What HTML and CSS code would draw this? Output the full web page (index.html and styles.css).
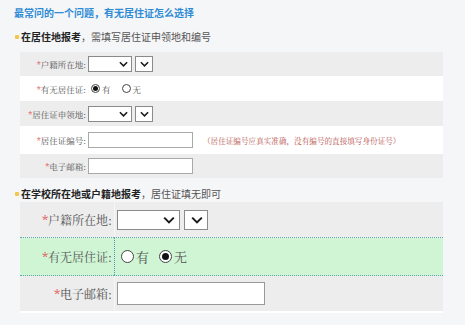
FILE: index.html
```html
<!DOCTYPE html>
<html lang="zh-CN">
<head>
  <meta charset="UTF-8">
  <meta name="viewport" content="width=device-width, initial-scale=1.0">
  <link rel="stylesheet" href="styles.css">
  <title>有无居住证怎么选择</title>
</head>
<body>
  <div class="page">
    <h1 class="title">最常问的一个问题，有无居住证怎么选择</h1>

    <p class="sub"><span class="dot"></span><b>在居住地报考</b>，需填写居住证申领地和编号</p>

    <table class="form small">
      <tr class="gray">
        <td class="lbl"><i>*</i>户籍所在地:</td>
        <td class="fld">
          <span class="sel wide"><svg viewBox="0 0 10 6"><path d="M1 1 L5 5 L9 1"/></svg></span><span class="sel narrow"><svg viewBox="0 0 10 6"><path d="M1 1 L5 5 L9 1"/></svg></span>
        </td>
      </tr>
      <tr class="white">
        <td class="lbl"><i>*</i>有无居住证:</td>
        <td class="fld">
          <span class="radio on"></span><span class="opt">有</span><span class="radio"></span><span class="opt">无</span>
        </td>
      </tr>
      <tr class="gray">
        <td class="lbl"><i>*</i>居住证申领地:</td>
        <td class="fld">
          <span class="sel wide"><svg viewBox="0 0 10 6"><path d="M1 1 L5 5 L9 1"/></svg></span><span class="sel narrow"><svg viewBox="0 0 10 6"><path d="M1 1 L5 5 L9 1"/></svg></span>
        </td>
      </tr>
      <tr class="white tall">
        <td class="lbl"><i>*</i>居住证编号:</td>
        <td class="fld">
          <span class="txt"></span><span class="hint">（居住证编号应真实准确，没有编号的直接填写身份证号）</span>
        </td>
      </tr>
      <tr class="gray">
        <td class="lbl"><i>*</i>电子邮箱:</td>
        <td class="fld"><span class="txt"></span></td>
      </tr>
    </table>

    <p class="sub sub2"><span class="dot"></span><b>在学校所在地或户籍地报考</b>，居住证填无即可</p>

    <table class="form big">
      <tr class="gray">
        <td class="lbl"><i>*</i>户籍所在地:</td>
        <td class="fld">
          <span class="sel wide"><svg viewBox="0 0 10 6"><path d="M1 1 L5 5 L9 1"/></svg></span><span class="sel narrow"><svg viewBox="0 0 10 6"><path d="M1 1 L5 5 L9 1"/></svg></span>
        </td>
      </tr>
      <tr class="green">
        <td class="lbl"><i>*</i>有无居住证:</td>
        <td class="fld">
          <span class="radio"></span><span class="opt">有</span><span class="radio on"></span><span class="opt">无</span>
        </td>
      </tr>
      <tr class="gray">
        <td class="lbl"><i>*</i>电子邮箱:</td>
        <td class="fld"><span class="txt"></span></td>
      </tr>
    </table>
  </div>
</body>
</html>
```

FILE: styles.css
```css
*, *:before, *:after {
  margin: 0;
  padding: 0;
  box-sizing: border-box;
}
body {
  background: #f5f6f8;
  font-family: "Noto Sans CJK SC", sans-serif;
  color: #333;
}

.page {
  padding: 7px 22px 0 14px;
}

.title {
  font-size: 10px;
  line-height: 12px;
  font-weight: bold;
  color: #2e8bd5;
}

.sub {
  margin: 12px 0 9px 1px;
  font-size: 10px;
  line-height: 12px;
  color: #555;
  display: flex;
  align-items: center;
}
.sub b {
  color: #222;
}
.sub2 {
  margin: 10px 0 2px 1px;
}
.dot {
  width: 4px;
  height: 4px;
  margin-right: 2px;
  background: #f2c649;
  border-radius: 1px;
}

/* the two forms */
.form {
  margin-left: 6px;
  width: 423px;
  border-collapse: collapse;
  font-family: "Noto Serif CJK SC", "Noto Sans CJK SC", serif;
  color: #555;
}
.form td {
  padding: 0;
  vertical-align: middle;
}
.form .lbl {
  text-align: right;
  white-space: nowrap;
}
.form i {
  font-style: normal;
  color: #e0353a;
}
.form .fld {
  display: flex;
  align-items: center;
}
.gray { background: #ededed; }
.white { background: #fff; }

.sel {
  display: inline-flex;
  align-items: center;
  justify-content: flex-end;
  background: #fff;
  border: 1px solid #8a8a8a;
}
.sel svg {
  fill: none;
  stroke: #1a1a1a;
  stroke-width: 1.7;
}
.txt {
  display: inline-block;
  background: #fff;
  border: 1px solid #a9a9a9;
}
.radio {
  display: inline-flex;
  align-items: center;
  justify-content: center;
  border: 1px solid #444;
  border-radius: 50%;
  background: #fff;
}
.radio.on:after {
  content: "";
  border-radius: 50%;
  background: #111;
}

/* small form */
.small { font-size: 8.5px; }
.small tr { height: 24px; }
.small tr.tall { height: 28px; }
.small tr:nth-child(2), .small tr:nth-child(3) { height: 25px; }
.small .lbl { width: 67px; padding-right: 1px; }
.small .fld { height: inherit; padding-left: 1px; }
.small .sel { height: 16px; padding-right: 3px; }
.small .sel svg { width: 9px; height: 6px; }
.small .sel.wide { width: 44px; }
.small .sel.narrow { width: 18px; margin-left: 3px; }
.small .txt { width: 105px; height: 16px; }
.small .radio { width: 9px; height: 9px; margin-left: 3px; }
.small .radio + .opt { margin-left: 2px; margin-right: 8px; }
.small .radio.on:after { width: 5px; height: 5px; }
.hint {
  margin-left: 10px;
  font-size: 7.6px;
  color: #b8554f;
}

/* big form */
.big { font-size: 12px; border-bottom: 2px solid #fff; }
.big tr { height: 35px; }
.big tr.green { height: 37px; }
.big .lbl { width: 94px; padding-right: 2px; }
.big .fld { height: inherit; padding-left: 2px; border-left: 1px solid #f7f7f7; }
.big .sel { height: 20px; padding-right: 4px; }
.big .sel svg { width: 12px; height: 8px; }
.big .sel.wide { width: 63px; }
.big .sel.narrow { width: 24px; margin-left: 4px; }
.big .txt { width: 148px; height: 23px; border-color: #999; }
.big .radio { width: 13px; height: 13px; }
.big .radio:first-child { margin-left: 4px; }
.big .radio + .opt { margin-left: 2px; margin-right: 10px; font-size: 13px; }
.big .radio.on:after { width: 7px; height: 7px; }

.green {
  background: #cff5d4;
  border-top: 1px dotted #5fa8b0;
  border-bottom: 1px dotted #5fa8b0;
}
.green .fld {
  border-left: 1px dotted #4d95c4;
}
```
